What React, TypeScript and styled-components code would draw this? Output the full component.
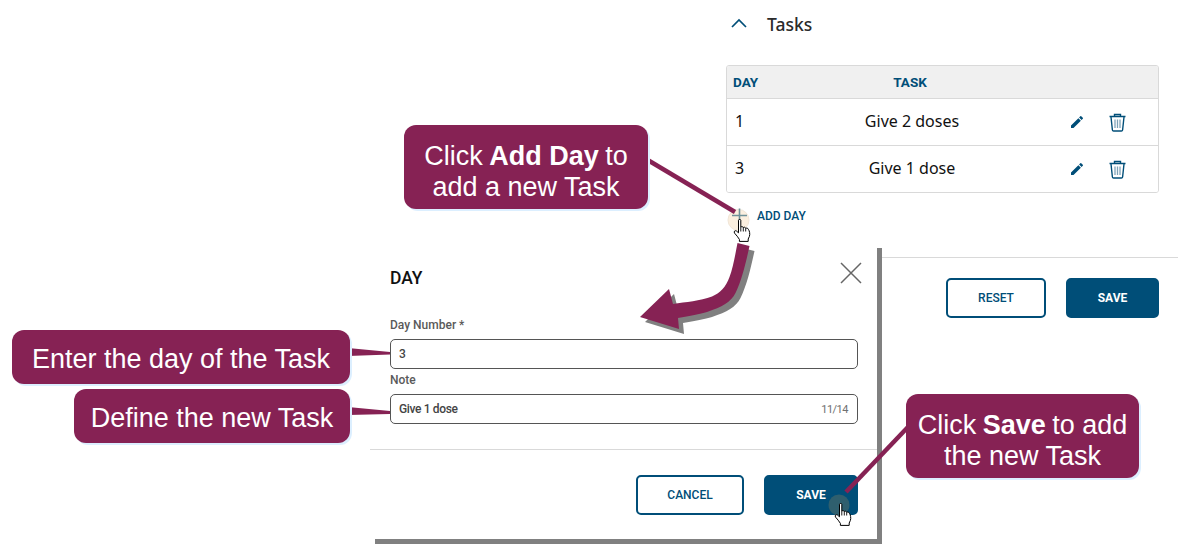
import React from "react";
import styled, { createGlobalStyle } from "styled-components";

const NAVY = "#004e78";
const PLUM = "#862254";

const GlobalStyle = createGlobalStyle`
  html, body {
    margin: 0;
    padding: 0;
    background: #fff;
    font-family: "Noto Sans", sans-serif;
  }
`;

const Screen = styled.div`
  position: relative;
  width: 1178px;
  height: 556px;
  overflow: hidden;
  display: flex;
  justify-content: flex-end;
  background: #fff;
`;

const TaskPanel = styled.section`
  width: 452px;
`;

const PanelHead = styled.header`
  height: 47px;
  display: flex;
  align-items: center;
  gap: 19px;
  padding-left: 4px;
  margin-bottom: 18px;
  font-size: 17.5px;
  font-weight: 500;
  color: #2b2b2b;
`;

const ChevronIcon = styled.svg`
  margin-top: -2px;
`;

const TaskTable = styled.div`
  width: 433px;
  box-sizing: border-box;
  border: 1px solid #d9d9d9;
  border-radius: 3px;
  overflow: hidden;
`;

const TaskRow = styled.div<{ $head?: boolean }>`
  display: grid;
  grid-template-columns: 100px 170px 1fr;
  align-items: center;
  height: ${(p) => (p.$head ? "32px" : "46px")};
  background: ${(p) => (p.$head ? "#f0f0f0" : "#fff")};
  border-bottom: 1px solid #d9d9d9;
  &:last-child {
    border-bottom: 0;
  }
`;

const HeadCell = styled.div<{ $center?: boolean }>`
  font: 700 13.5px Roboto, sans-serif;
  color: ${NAVY};
  padding-left: ${(p) => (p.$center ? "0" : "6px")};
  text-align: ${(p) => (p.$center ? "center" : "left")};
  margin-left: ${(p) => (p.$center ? "-4px" : "0")};
`;

const DayCell = styled.div`
  font-size: 16px;
  color: #111;
  padding: 0 0 2px 8px;
`;

const NoteCell = styled.div`
  font-size: 16px;
  color: #111;
  text-align: center;
  padding-bottom: 2px;
`;

const ActionCell = styled.div`
  display: flex;
  padding-left: 60px;
`;

const IconButton = styled.span`
  width: 40px;
  height: 24px;
  display: flex;
  align-items: center;
  justify-content: center;
`;

const AddDayRow = styled.div`
  height: 20px;
  margin-top: 13px;
  padding-left: 31px;
  display: flex;
  align-items: center;
  font: 500 12px Roboto, sans-serif;
  color: ${NAVY};
`;

const PanelFooter = styled.footer`
  margin-top: 31px;
  padding: 20px 19px 0 0;
  border-top: 1px solid #d9d9d9;
  display: flex;
  justify-content: flex-end;
  gap: 20px;
`;

const ActionButton = styled.button<{ $primary?: boolean; $width: number }>`
  width: ${(p) => p.$width}px;
  height: 40px;
  box-sizing: border-box;
  padding: 0;
  border: 2px solid ${NAVY};
  border-radius: 5px;
  background: ${(p) => (p.$primary ? NAVY : "#fff")};
  color: ${(p) => (p.$primary ? "#fff" : NAVY)};
  font: ${(p) => (p.$primary ? 700 : 500)} 12px Roboto, sans-serif;
`;

const Dialog = styled.div`
  position: absolute;
  left: 370px;
  top: 243px;
  width: 507px;
  height: 296px;
  background: #fff;
  box-shadow: 5px 5px 0 #808080;
`;

const DialogBody = styled.div`
  padding: 24px 19px 0 20px;
`;

const DialogHead = styled.div`
  display: flex;
  justify-content: space-between;
  align-items: flex-start;
  height: 22px;
  margin-bottom: 28px;
`;

const DialogTitle = styled.h2`
  margin: 0;
  font: 500 17.5px/22px Roboto, sans-serif;
  color: #111;
`;

const CloseIcon = styled.svg`
  margin: -5px -4px 0 0;
`;

const FieldLabel = styled.div`
  font: 500 12px/16px Roboto, sans-serif;
  color: #5a5a5a;
  margin-bottom: 6px;
`;

const FieldBox = styled.div`
  height: 30px;
  box-sizing: border-box;
  margin-bottom: 3px;
  padding: 0 9px 0 8px;
  border: 1px solid #555;
  border-radius: 5px;
  display: flex;
  align-items: center;
  justify-content: space-between;
  font: 500 12px Roboto, sans-serif;
  letter-spacing: -0.35px;
  color: #444;
`;

const Counter = styled.span`
  font: 400 11px Roboto, sans-serif;
  letter-spacing: -0.5px;
  color: #707070;
`;

const DialogRule = styled.div`
  height: 1px;
  margin-top: 25px;
  background: #d9d9d9;
`;

const DialogFooter = styled.div`
  display: flex;
  justify-content: flex-end;
  gap: 20px;
  padding: 25px 19px 0 0;
`;

const Callout = styled.div<{ $left: number; $top: number; $width: number; $height: number }>`
  position: absolute;
  left: ${(p) => p.$left}px;
  top: ${(p) => p.$top}px;
  width: ${(p) => p.$width}px;
  height: ${(p) => p.$height}px;
  box-sizing: border-box;
  padding-top: ${(p) => (p.$height > 60 ? 9 : 4)}px;
  display: flex;
  align-items: center;
  justify-content: center;
  text-align: center;
  background: ${PLUM};
  border-radius: 12px;
  box-shadow: 2px 2px 0 #dcefff;
  color: #fff;
  font: 27px/31px "Liberation Sans", Arial, sans-serif;

  b {
    margin: 0 -1px;
  }
`;

const Overlay = styled.svg`
  position: absolute;
  left: 0;
  top: 0;
  pointer-events: none;
`;

const Hand = styled.svg<{ $left: number; $top: number }>`
  position: absolute;
  left: ${(p) => p.$left}px;
  top: ${(p) => p.$top}px;
`;

const Pencil = () => (
  <svg width="16" height="16" viewBox="0 0 24 24" fill={NAVY}>
    <path d="M3 17.25V21h3.75L17.81 9.94l-3.75-3.75L3 17.25zM20.71 7.04a1 1 0 0 0 0-1.41l-2.34-2.34a1 1 0 0 0-1.41 0l-1.83 1.83 3.75 3.75 1.83-1.83z" />
  </svg>
);

const Trash = () => (
  <svg width="17" height="19" viewBox="0 0 17 19" fill="none">
    <path d="M0.5 3.5H16.5M5.5 3V1.5H11.5V3" stroke={NAVY} strokeWidth="1.4" />
    <path d="M2 4L3.4 17a1.2 1.2 0 0 0 1.2 1H12.4a1.2 1.2 0 0 0 1.2-1L15 4" stroke={NAVY} strokeWidth="1.4" />
    <path d="M6 6.5V15M8.5 6.5V15M11 6.5V15" stroke="#7ea3b8" strokeWidth="1.3" />
  </svg>
);

const Pointer = ({ left, top }: { left: number; top: number }) => (
  <Hand $left={left} $top={top} width="18" height="23" viewBox="0 0 18 23">
    <path
      d="M5.5 1.2C5.5 0.2 7.8 0.2 7.8 1.2V8.2C8.3 7.4 10 7.4 10.3 8.6C10.8 7.9 12.4 8 12.7 9.4C13.3 8.8 15 9 15.4 10.4C16.5 11.8 17.2 15 16.4 17.4L15.2 20V22.4H6.4V20.4C5 18 3.5 16.4 1.6 14.2C0.4 12.6 2 11 3.4 12L5.5 13.8Z"
      fill="#fff"
      stroke="#000"
      strokeWidth="1"
      strokeLinejoin="round"
    />
    <path d="M7.8 8.2V12.5M10.3 8.6V12.5M12.7 9.4V12.5" stroke="#000" strokeWidth="0.9" />
  </Hand>
);

const tasks = [
  { day: 1, note: "Give 2 doses" },
  { day: 3, note: "Give 1 dose" },
];

const arrowPath =
  "M737.5 243C735 256 733 268 729.5 277C726 287 720 293 712 296.5C700 301 686 302 673 304L669 289L640 317L679 329L678 318C690 316 700 314 707 312C722 307 731 302 735.5 293C742 280 746 262 749.5 246Z";

// Task editor page with the training callouts laid over it
export default function App() {
  return (
    <Screen>
      <GlobalStyle />
      <TaskPanel>
        <PanelHead>
          <ChevronIcon width="18" height="18" viewBox="0 0 18 18" fill="none">
            <path d="M2 13L9 6L16 13" stroke={NAVY} strokeWidth="1.7" />
          </ChevronIcon>
          Tasks
        </PanelHead>
        <TaskTable>
          <TaskRow $head>
            <HeadCell>DAY</HeadCell>
            <HeadCell $center>TASK</HeadCell>
            <span />
          </TaskRow>
          {tasks.map((t) => (
            <TaskRow key={t.day}>
              <DayCell>{t.day}</DayCell>
              <NoteCell>{t.note}</NoteCell>
              <ActionCell>
                <IconButton>
                  <Pencil />
                </IconButton>
                <IconButton>
                  <Trash />
                </IconButton>
              </ActionCell>
            </TaskRow>
          ))}
        </TaskTable>
        <AddDayRow>ADD DAY</AddDayRow>
        <PanelFooter>
          <ActionButton $width={100}>RESET</ActionButton>
          <ActionButton $width={93} $primary>
            SAVE
          </ActionButton>
        </PanelFooter>
      </TaskPanel>

      <Dialog>
        <DialogBody>
          <DialogHead>
            <DialogTitle>DAY</DialogTitle>
            <CloseIcon width="22" height="22" viewBox="0 0 22 22" fill="none">
              <path d="M1 1L21 21M21 1L1 21" stroke="#666" strokeWidth="1.5" />
            </CloseIcon>
          </DialogHead>
          <FieldLabel>Day Number *</FieldLabel>
          <FieldBox>3</FieldBox>
          <FieldLabel>Note</FieldLabel>
          <FieldBox>
            Give 1 dose
            <Counter>11/14</Counter>
          </FieldBox>
        </DialogBody>
        <DialogRule />
        <DialogFooter>
          <ActionButton $width={108}>CANCEL</ActionButton>
          <ActionButton $width={94} $primary>
            SAVE
          </ActionButton>
        </DialogFooter>
      </Dialog>

      <Overlay width="1178" height="556" viewBox="0 0 1178 556">
        <circle cx="738.5" cy="220" r="10.5" fill="#fbefdf" stroke="#f1e6d8" />
        <path d="M732 215.5H747M739.5 208.5V223" stroke="#6f9199" strokeWidth="1.6" />
        <circle cx="839" cy="505" r="10.5" fill="#2f5f6e" />
        <path d={arrowPath} fill="#808080" transform="translate(5 5)" />
        <path d={arrowPath} fill={PLUM} />
        <path d="M646 159L735 212" stroke={PLUM} strokeWidth="4.5" />
        <path d="M908 427L846 492" stroke={PLUM} strokeWidth="4.5" />
        <polygon points="348,348 348,356 390,354.5 390,352" fill={PLUM} />
        <polygon points="348,407 348,415 390,414 390,411" fill={PLUM} />
      </Overlay>
      <Pointer left={733} top={219} />
      <Pointer left={834} top={503} />

      <Callout $left={404} $top={125} $width={244} $height={84}>
        <div>
          Click <b>Add Day</b> to
          <br />
          add a new Task
        </div>
      </Callout>
      <Callout $left={12} $top={330} $width={338} $height={54}>
        Enter the day of the Task
      </Callout>
      <Callout $left={74} $top={389} $width={276} $height={54}>
        Define the new Task
      </Callout>
      <Callout $left={906} $top={394} $width={233} $height={84}>
        <div>
          Click <b>Save</b> to add
          <br />
          the new Task
        </div>
      </Callout>
    </Screen>
  );
}
